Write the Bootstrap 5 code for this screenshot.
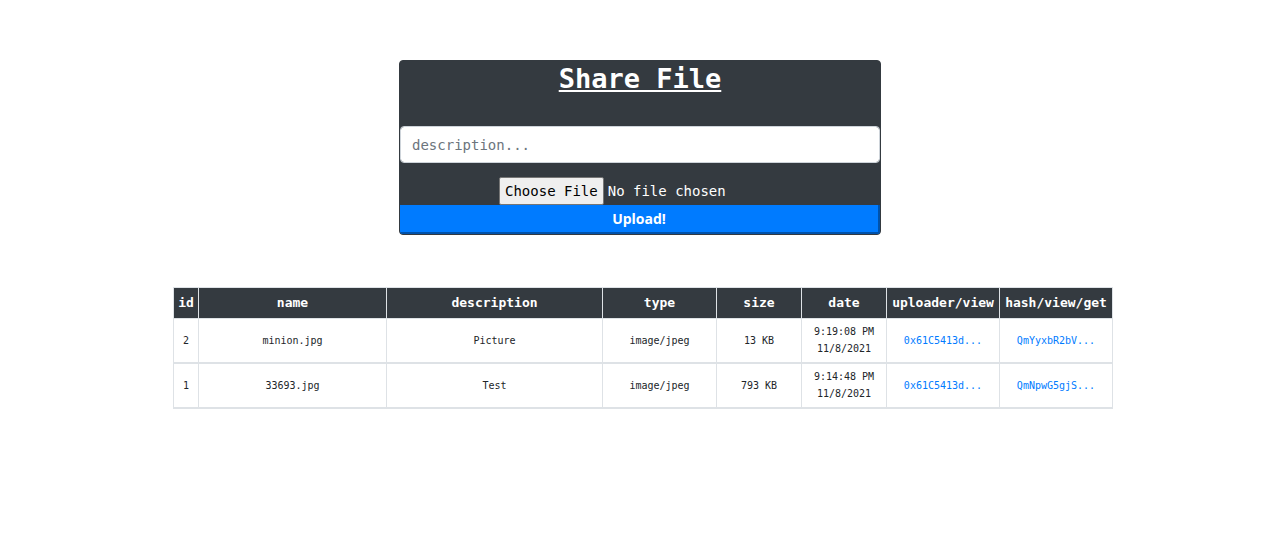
<!DOCTYPE html>
<html lang="en">
<head>
<meta charset="utf-8">
<meta name="viewport" content="width=device-width, initial-scale=1">
<title>Share File</title>
<link href="https://cdn.jsdelivr.net/npm/bootstrap@5.3.0/dist/css/bootstrap.min.css" rel="stylesheet">
<style>
  body { font-family: "DejaVu Sans Mono", "Liberation Mono", monospace; color: #212529; }
  .page { padding-top: 60px; }
  .share-card { max-width: 482px; background: #343a40; color: #fff; border: 1px solid #343a40; border-radius: 4px; overflow: hidden; }
  .share-title { font-size: 27px; line-height: 36px; margin-bottom: 29px; }
  .share-card .form-control { height: 37px; font-size: 14px; padding: 6px 11px; border-color: #ced4da; border-radius: 4px; }
  .share-card .form-control::placeholder { color: #6c757d; }
  .file-field { width: 282px; max-width: 100%; font-size: 14px; line-height: 24px; margin-top: 14px; }
  .file-field::file-selector-button { height: 28px; padding: 1px 5px; border: 1px solid #767676; border-radius: 2px; background: #efefef; color: #000; margin-right: 4px; }
  .upload-btn { height: 29px; font: bold 14px/26px "Open Sans", sans-serif; color: #fff; background: #007bff; border: 2px outset #007bff; border-top-width: 0; border-left-width: 0; padding: 0; }
  .files-wrap { max-width: 942px; margin-top: 52px; padding-left: 2px; }
  .files { table-layout: fixed; min-width: 820px; font-size: 10px; line-height: 17px; text-align: center; vertical-align: middle; border-color: #dee2e6; color: #212529; }
  .files th { background: #343a40; color: #fff; font-size: 13px; line-height: 20px; padding: 5px 0; white-space: nowrap; }
  .files td { padding: 4px 0 5px; border-bottom-width: 2px; }
  .files thead th { border-top: 0; }
  .files a { color: #007bff; text-decoration: none; }
  .w-id { width: 25px; } .w-name { width: 188px; } .w-desc { width: 216px; }
  .w-type { width: 114px; } .w-short { width: 85px; } .w-link { width: 113px; }
</style>
</head>
<body>
<main class="page container-fluid">
  <div class="pe-1">
    <form class="share-card mx-auto text-center">
      <h2 class="share-title fw-bold text-decoration-underline">Share File</h2>
      <input type="text" class="form-control" placeholder="description..." aria-label="description">
      <input type="file" class="file-field d-block mx-auto" aria-label="Choose File">
      <button type="button" class="upload-btn d-block w-100">Upload!</button>
    </form>
  </div>
  <div class="files-wrap mx-auto table-responsive">
    <table class="files table table-bordered mb-0">
      <colgroup>
        <col class="w-id"><col class="w-name"><col class="w-desc"><col class="w-type">
        <col class="w-short"><col class="w-short"><col class="w-link"><col class="w-link">
      </colgroup>
      <thead>
        <tr><th scope="col">id</th><th scope="col">name</th><th scope="col">description</th><th scope="col">type</th><th scope="col">size</th><th scope="col">date</th><th scope="col">uploader/view</th><th scope="col">hash/view/get</th></tr>
      </thead>
      <tbody>
        <tr><td>2</td><td>minion.jpg</td><td>Picture</td><td>image/jpeg</td><td>13 KB</td><td>9:19:08 PM<br>11/8/2021</td><td><a href="#">0x61C5413d...</a></td><td><a href="#">QmYyxbR2bV...</a></td></tr>
        <tr><td>1</td><td>33693.jpg</td><td>Test</td><td>image/jpeg</td><td>793 KB</td><td>9:14:48 PM<br>11/8/2021</td><td><a href="#">0x61C5413d...</a></td><td><a href="#">QmNpwG5gjS...</a></td></tr>
      </tbody>
    </table>
  </div>
</main>
<script src="https://cdn.jsdelivr.net/npm/bootstrap@5.3.0/dist/js/bootstrap.bundle.min.js"></script>
</body>
</html>
